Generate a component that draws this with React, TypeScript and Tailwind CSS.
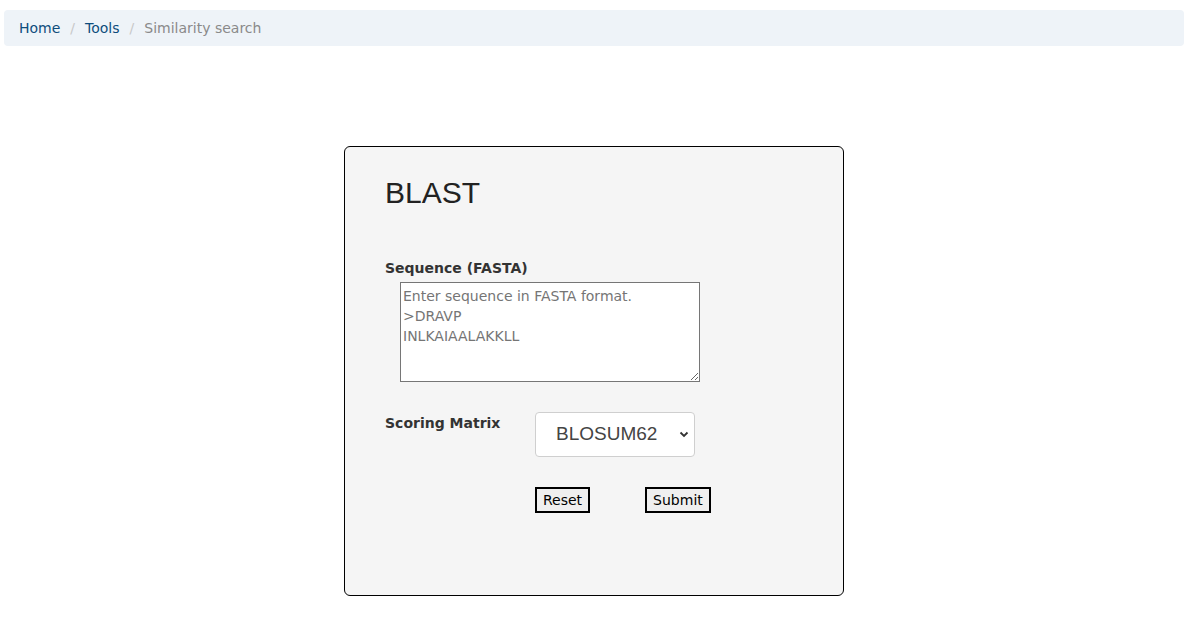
import React from "react";

const verdana = { fontFamily: '"DejaVu Sans", Verdana, sans-serif' };

export default function App() {
  return (
    <div className="min-h-[641px] bg-white pl-1 pr-[6px] pt-[10px]" style={verdana}>
      {/* breadcrumb */}
      <nav className="flex h-[36px] items-center rounded bg-[#eef3f8] px-[15px] text-[14px]">
        <a className="text-[#0d4c7c]">Home</a>
        <span className="px-[10px] text-[#c8c8c8]">/</span>
        <a className="text-[#0d4c7c]">Tools</a>
        <span className="px-[10px] text-[#c8c8c8]">/</span>
        <span className="text-[#8a8a8a]">Similarity search</span>
      </nav>

      {/* BLAST form card */}
      <div className="mx-auto mt-[100px] h-[450px] w-[500px] rounded-md border border-black bg-[#f5f5f5] pl-10 pt-[26px]">
        <h1
          className="text-[30px] leading-[40px] text-[#222]"
          style={{ fontFamily: '"Liberation Sans", Arial, sans-serif' }}
        >
          BLAST
        </h1>

        <label className="mt-[45px] block text-[14px] font-bold leading-[20px] text-[#333]">
          Sequence (FASTA)
        </label>
        <textarea
          className="ml-[15px] mt-[4px] block h-[100px] w-[300px] resize border border-[#767676] bg-white px-[2px] py-[3px] text-[14px] leading-[20px] outline-none placeholder:text-[#757575]"
          placeholder={"Enter sequence in FASTA format.\n>DRAVP\nINLKAIAALAKKLL"}
        />

        <div className="mt-[30px] flex">
          <label className="mt-[1px] w-[150px] text-[14px] font-bold leading-[20px] text-[#333]">
            Scoring Matrix
          </label>
          <div className="relative">
            <select
              className="h-[45px] w-[160px] appearance-none rounded border border-[#cfcfcf] bg-white pl-5 text-[19px] text-[#444] outline-none"
              style={{ fontFamily: '"Liberation Sans", Arial, sans-serif' }}
            >
              <option>BLOSUM62</option>
              <option>BLOSUM45</option>
              <option>BLOSUM80</option>
              <option>PAM30</option>
              <option>PAM70</option>
            </select>
            <svg
              className="pointer-events-none absolute right-[6px] top-[19px]"
              width="10"
              height="7"
              viewBox="0 0 10 7"
              fill="none"
              stroke="#333"
              strokeWidth="1.8"
            >
              <path d="M1.5 1.5 L5 5 L8.5 1.5" />
            </svg>
          </div>
        </div>

        <div className="ml-[150px] mt-[30px] flex gap-[55px]">
          <button className="h-[26px] border-2 border-black bg-[#efefef] px-[6px] text-[14px] text-black">
            Reset
          </button>
          <button className="h-[26px] border-2 border-black bg-[#efefef] px-[6px] text-[14px] text-black">
            Submit
          </button>
        </div>
      </div>
    </div>
  );
}
